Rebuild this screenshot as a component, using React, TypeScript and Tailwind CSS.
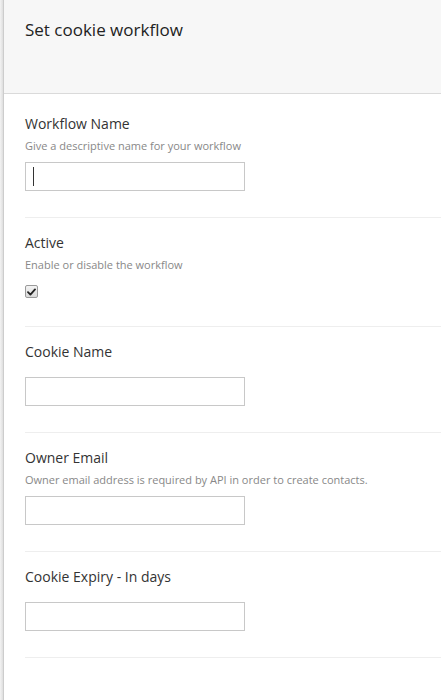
import React from "react";

interface IField {
  label: string;
  help?: string;
  kind: "text" | "checkbox";
  focused?: boolean;
}

const fields: IField[] = [
  { label: "Workflow Name", help: "Give a descriptive name for your workflow", kind: "text", focused: true },
  { label: "Active", help: "Enable or disable the workflow", kind: "checkbox" },
  { label: "Cookie Name", kind: "text" },
  { label: "Owner Email", help: "Owner email address is required by API in order to create contacts.", kind: "text" },
  { label: "Cookie Expiry - In days", kind: "text" },
];

const TextBox: React.FC<{ focused?: boolean }> = ({ focused }) => (
  <div className="relative w-[220px] h-[29px] border border-[#c8c8c8] bg-white">
    {/* fake caret, the field is focused in the screenshot */}
    {focused && <span className="absolute left-[7px] top-[4px] w-px h-[19px] bg-[#333]" />}
  </div>
);

const CheckBox = () => (
  <span className="flex items-center justify-center w-[13px] h-[13px] rounded-[2px] border border-[#9a9a9a] bg-gradient-to-b from-[#f4f4f4] to-[#d9d9d9]">
    <svg width="9" height="8" viewBox="0 0 9 8">
      <path d="M1 4.2 L3.4 6.6 L8 1.4" fill="none" stroke="#222" strokeWidth="1.8" strokeLinecap="round" strokeLinejoin="round" />
    </svg>
  </span>
);

const FieldRow: React.FC<{ item: IField; first: boolean }> = ({ item, first }) => (
  <div className={`${first ? "pt-[20px]" : "pt-[15px]"} pb-[26px] border-b border-[#eeeeee]`}>
    <div className="text-[14px] leading-[20px] text-[#333]">{item.label}</div>
    {item.help ? (
      <div className="mt-[3px] text-[11px] leading-[18px] text-[#888]">{item.help}</div>
    ) : null}
    <div className={item.help ? "mt-[7px]" : "mt-[15px]"}>
      {item.kind === "checkbox" ? (
        <div className="pt-[4px] pb-[2px]">
          <CheckBox />
        </div>
      ) : (
        <TextBox focused={item.focused} />
      )}
    </div>
  </div>
);

export default function App() {
  return (
    <div className="flex min-h-[700px] bg-white" style={{ fontFamily: '"Open Sans", "Noto Sans", sans-serif' }}>
      {/* LEFT SHADOW EDGE */}
      <div className="w-[4px] shrink-0 bg-gradient-to-r from-[#f3f3f3] to-[#dedede] border-r border-[#cdcdcd]" />

      <div className="flex-1 flex flex-col">
        {/* HEADER */}
        <div className="h-[94px] bg-[#f7f7f7] border-b border-[#dadada] pl-[21px] pt-[18px]">
          <h1 className="text-[17px] leading-[24px] text-[#222] font-normal">Set cookie workflow</h1>
        </div>

        {/* FORM */}
        <div className="pl-[21px]">
          {fields.map((f, i) => (
            <FieldRow key={f.label} item={f} first={i === 0} />
          ))}
        </div>
      </div>
    </div>
  );
}
